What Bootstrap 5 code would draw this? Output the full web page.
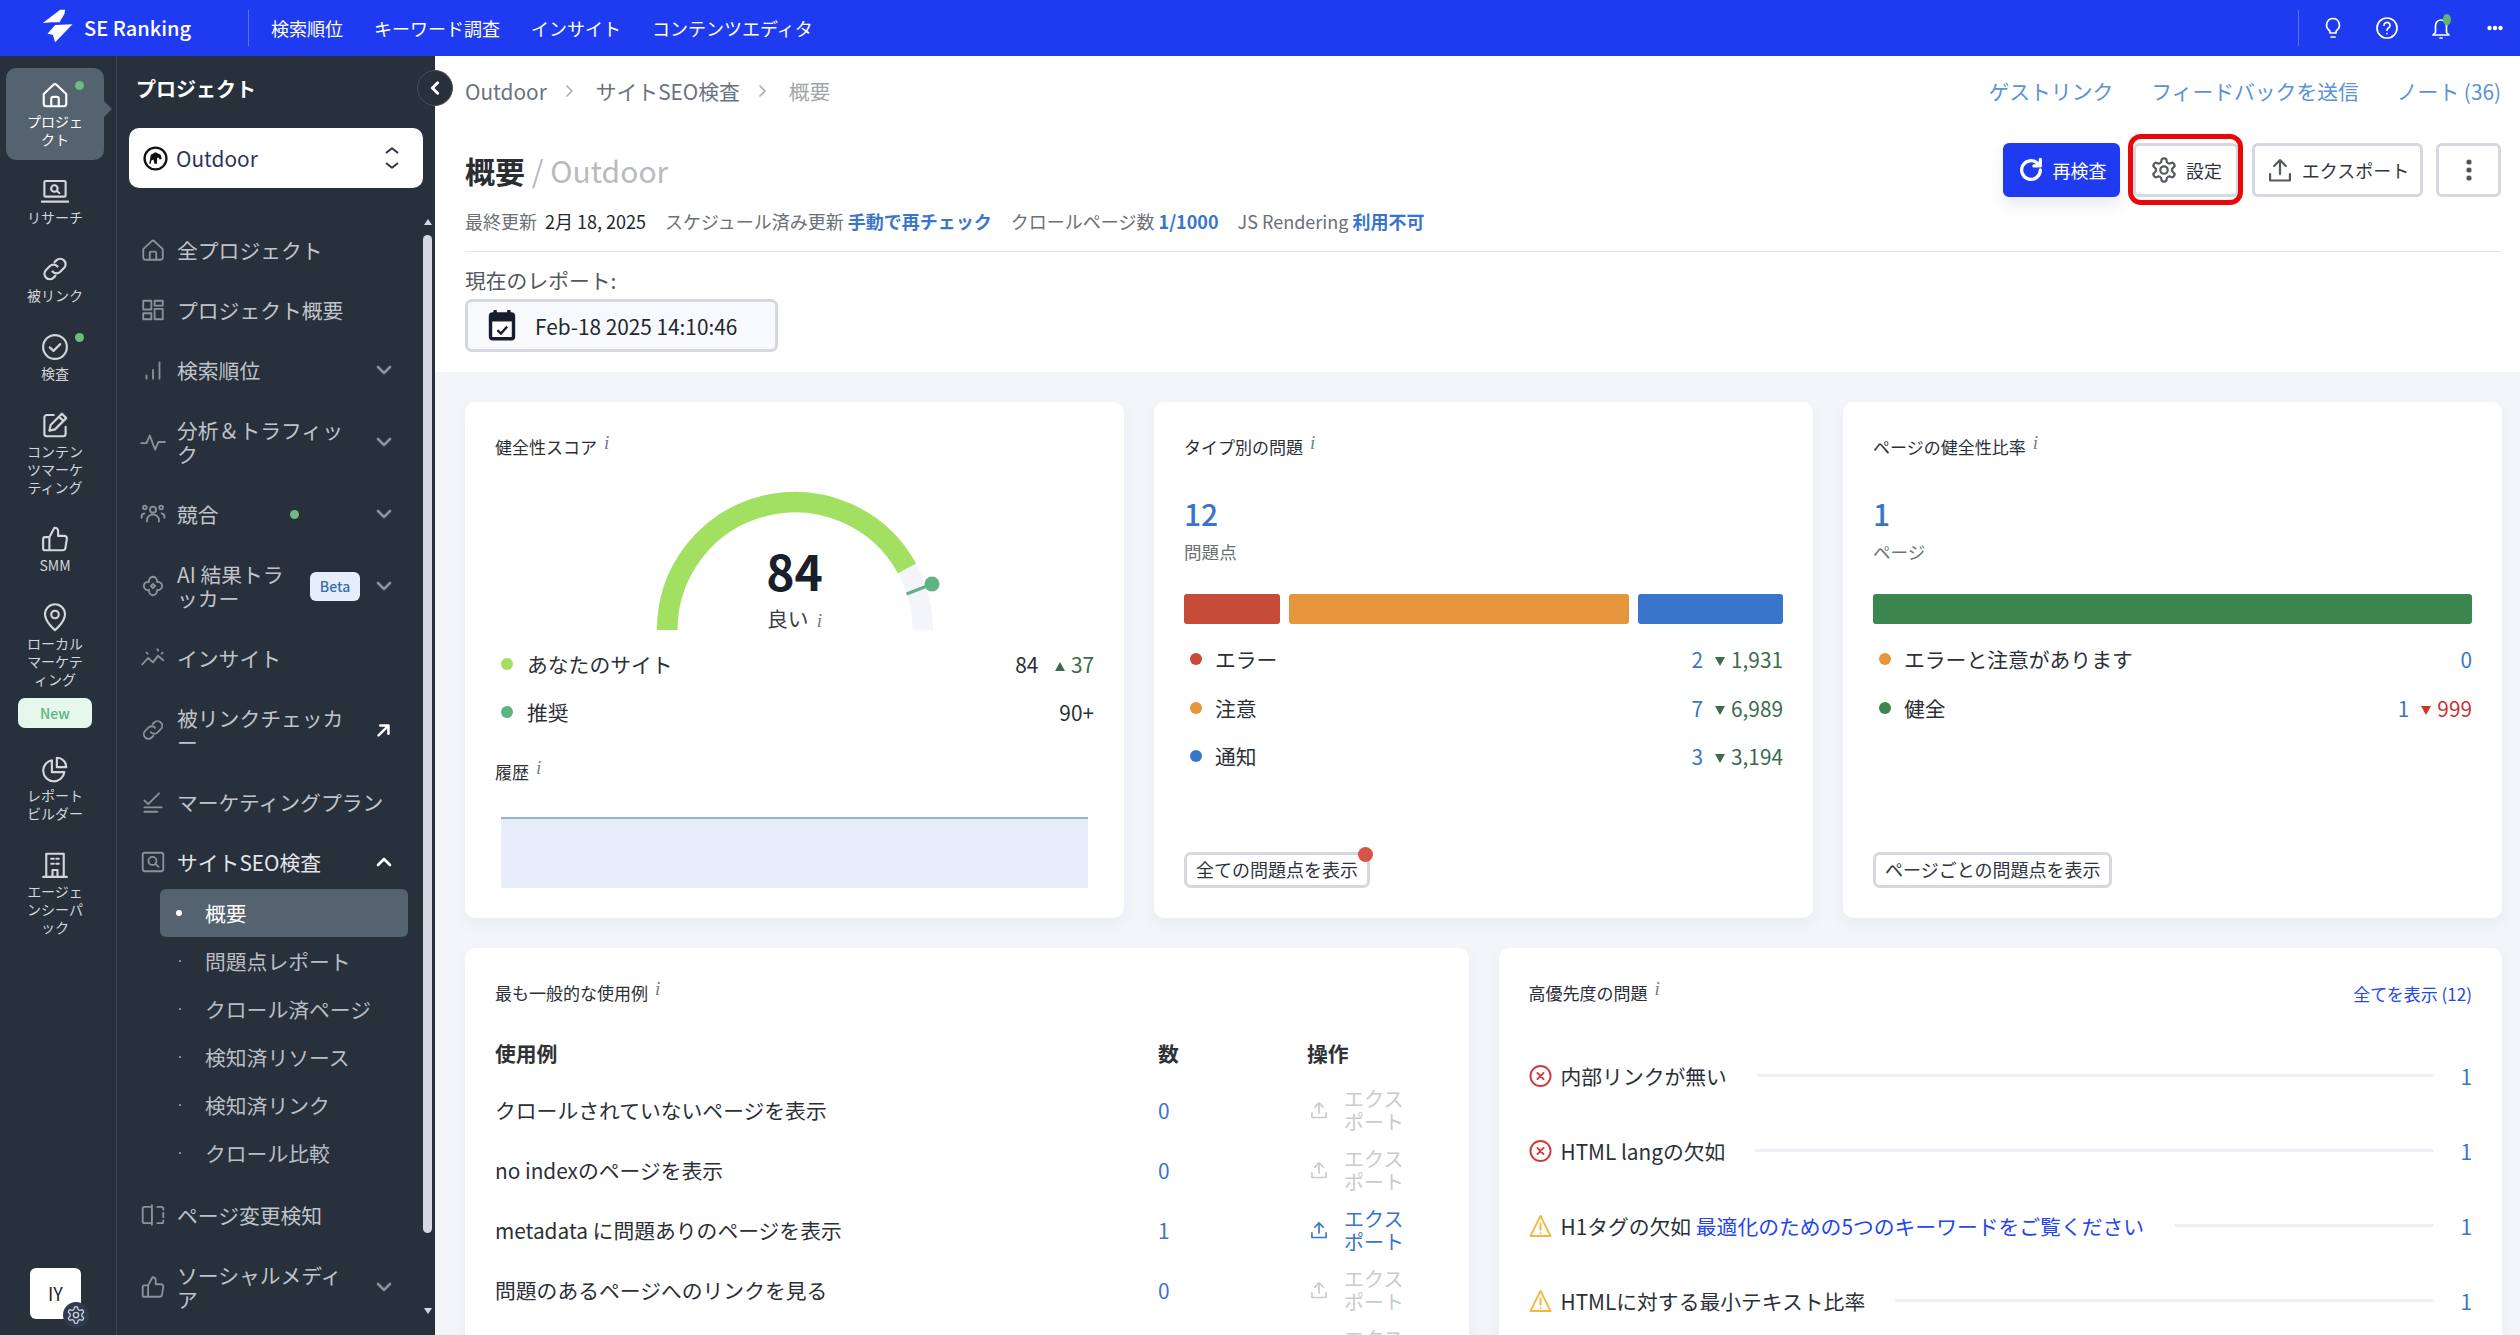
<!DOCTYPE html>
<html lang="ja">
<head>
<meta charset="utf-8">
<title>SE Ranking</title>
<link href="https://cdn.jsdelivr.net/npm/bootstrap@5.3.0/dist/css/bootstrap.min.css" rel="stylesheet">
<style>
html,body{height:100%;overflow:hidden;margin:0}
body{font-family:"Noto Sans CJK JP","Noto Sans",sans-serif;font-size:20.8px;color:#2b3038;background:#f3f5f9;line-height:24px}
svg.ico{fill:none;stroke:currentColor;stroke-width:1.7;stroke-linecap:round;stroke-linejoin:round;flex:none;display:block}
a{text-decoration:none}
.sr-top{height:56px;background:#1f3bf1;color:#fff;flex:none}
.sr-logo{margin:-4px 0 0 42px;width:31px;height:34px;fill:#fff;flex:none}
.sr-brand{margin-left:11px;font-size:20px;font-weight:500;width:107px;white-space:nowrap}
.sr-vline{width:1px;height:36px;background:rgba(255,255,255,.28)}
.sr-v1{margin-left:57px}
.sr-menu{margin-left:22px;gap:31px;font-size:18px;color:#fff;font-weight:400}
.sr-tools{margin-left:auto;margin-right:-2px}
.sr-tools .sr-vline{margin-right:7px}
.sr-tools .sr-tool{width:54px;height:30px;position:relative;color:#fff}
.sr-tool svg{width:24px;height:24px}
.sr-tool svg.sr-dots{width:16px;height:6px;fill:#fff}
.sr-tool-dot{position:absolute;width:8px;height:11px;border-radius:50%;background:#5fb56b;left:29px;top:1px}
.sr-wrap{flex:1;min-height:0}
.sr-rail{width:117px;flex:none;background:#27303b;border-right:1px solid #3c4651;padding:12px 12px 0 6px;position:relative;gap:4px}
.rail-it{width:98px;padding:12px 0 12px;border-radius:10px;color:#d3d6da;text-align:center;font-size:14px;line-height:18px;position:relative}
.rail-it svg{width:30px;height:30px;margin:0 auto 2px}
.rail-it span{display:block;width:60px;margin:0 auto;line-break:anywhere}
.rail-on{background:#556270;color:#fff}
.rail-on::after{content:"";position:absolute;right:-8px;top:33px;border-left:8px solid #556270;border-top:8px solid transparent;border-bottom:8px solid transparent}
.rail-dot{position:absolute;left:69px;top:13px;width:9px;height:9px;border-radius:50%;background:#6dbb83}
.rail-new{width:74px;height:30px;margin:-6px 0 10px 12px;background:#e6f7ec;color:#5db483;border-radius:7px;font-size:14px;font-weight:500;line-height:30px;text-align:center}
.rail-user{position:absolute;left:30px;top:1212px;width:51px;height:51px;background:#fff;border-radius:6px;color:#1c2430;font-size:18px;line-height:51px;text-align:center}
.rail-gear{position:absolute;left:33px;top:34px;width:26px;height:26px;border-radius:50%;background:#2f3b4e;color:#c8ccd2;display:flex;align-items:center;justify-content:center}
.rail-gear svg{width:20px;height:20px}
.sr-panel{width:318px;flex:none;background:#27303b;position:relative;color:#c0c4ca;overflow:hidden}
.panel-h{color:#fff;font-weight:700;font-size:20px;padding:21px 0 0 19px;height:64px}
.panel-sel{margin:8px 12px 0 12px;height:60px;background:#fff;border-radius:10px;color:#2a3658;padding:0 20px 0 14px}
.panel-sel svg.ud{width:22px;height:26px;margin-left:auto;color:#2a3040}
.sel-logo{width:25px;height:25px;margin-right:8px;flex:none}
.panel-list{margin-top:32px}
.navi{padding:18px 43px 18px 23px;color:#c0c4ca;line-height:24px;line-break:anywhere}
.navi>svg.ni{width:26px;height:26px;color:#8b929b;margin:-1px 11px -1px 0}
.navi-t{flex:0 0 170px}
.nt-short{flex-basis:113px}
.nt-ai{flex-basis:115px}
.nt-wide{flex-basis:225px}
.navi-up{color:#e3e5e8}
.navi .chev{width:16px;height:16px;margin-left:auto;color:#8b929b;stroke-width:2.6}
.navi .chev-w{color:#fff}
.navi .chev-x{stroke-width:3.6;width:17px;height:17px}
.navi-green{width:9px;height:9px;background:#6dbb83;border-radius:50%;flex:none}
.navi-beta{width:50px;height:29px;background:#e6eef9;color:#3a6cb0;font-size:14px;font-weight:500;border-radius:6px;text-align:center;line-height:29px;margin:0 16px 0 auto;flex:none}
.subs{margin:-3px 0 8px 43px;width:248px}
.sub-it{height:48px;border-radius:6px;padding-left:19px;color:#b9bdc4;display:flex;align-items:center}
.sub-it i{width:2px;height:2px;border-radius:50%;background:#aab0b7;margin-right:24px;flex:none;margin-left:0}
.sub-on{background:#556270;color:#fff}
.sub-on i{width:6px;height:6px;background:#fff;margin-right:23px;margin-left:-3px}
.sb-track{position:absolute;right:3px;top:179px;width:9px;height:998px;border-radius:5px;background:#d5d8e3}
.sb-up,.sb-dn{position:absolute;right:3px;width:0;border-left:4.5px solid transparent;border-right:4.5px solid transparent}
.sb-up{top:163px;border-bottom:6px solid #d5d8e3}
.sb-dn{top:1252px;border-top:6px solid #d5d8e3}
.sr-collapse{position:absolute;left:417px;top:14px;width:36px;height:36px;border-radius:50%;background:#27303b;border:1px solid #46505b;color:#fff;display:flex;align-items:center;justify-content:center;z-index:3}
.sr-collapse svg{width:14px;height:14px;stroke-width:3.4}
.sr-main{flex:1;min-width:0;overflow:hidden;background:#f3f5f9}
.top-sec{background:#fff;padding:23px 19px 19px 30px;height:316px}
.crumbs{height:24px;color:#6b7280;margin-bottom:40px}
.crumbs .sp{width:9px;height:14px;color:#a9adb4;margin:0 22px 0 18px;stroke-width:1.6}
.crumbs .cur{color:#a2a6ac}
.top-links{margin-left:auto;gap:38px}
.top-l{color:#5b92d8}
.title-row{height:54px}
.page-h{font-size:30px;font-weight:700;margin:0;color:#2a2d32;line-height:40px}
.page-h em{font-style:normal;font-weight:400;color:#b7babf}
.act-row{margin-left:auto;gap:13px}
.act-btn{height:54px;border-radius:6px;border:3px solid #d5d8e3;background:#fff;font-size:18px;color:#30353c;padding:0;box-shadow:none}
.act-btn svg.ico{width:28px;height:28px;color:#555a60;stroke-width:1.9}
.act-pri{width:117px;background:#1f3bf1;border-color:#1f3bf1;color:#fff;box-shadow:0 8px 14px rgba(40,60,120,.1)}
.act-pri:hover{background:#1f3bf1;border-color:#1f3bf1;color:#fff}
.act-pri svg.ico{color:#fff;stroke-width:2.8}
.act-set{width:106px;position:relative}
.act-set::after{content:"";position:absolute;left:-8px;top:-12px;right:-7px;bottom:-11px;border:5px solid #e80808;border-radius:13px;pointer-events:none}
.act-exp{width:171px}
.act-more{width:65px}
.metas{margin-top:12px;font-size:18px;color:#6b7076;gap:19px;line-height:24px;height:24px;white-space:nowrap}
.metas b{font-weight:400;color:#22272e}
.meta-l{color:#3a75cc;font-weight:700}
.top-hr{border-top:1.5px solid #e3e5ea;margin-top:18px}
.cur-lab{margin-top:15px;margin-bottom:1px;line-height:26px;color:#53575c}
.date-box{margin-top:6px;width:313px;height:53px;border:3px solid #d5d8e3;border-radius:7px;background:#f8f9fc;padding-left:20px;color:#22272e}
.date-box svg{width:28px;height:31px;margin-right:19px}
.cards{padding:30px 18px 0 30px}
.cards .row{--bs-gutter-x:30px;--bs-gutter-y:30px}
.sr-card{background:#fff;border-radius:10px;box-shadow:0 6px 16px rgba(35,50,90,.05);padding:34px 30px 30px}
.row1 .sr-card{height:516px}
.c-title{font-size:17px;line-height:22px;height:24px;color:#2b2f36;white-space:nowrap}
.c-title sup{font-family:"Liberation Serif",serif;font-style:italic;font-size:19px;color:#6f7d8d;margin-left:7px;top:-5px;line-height:0;position:relative;vertical-align:baseline}
.gauge{position:relative;height:150px;margin-top:20px}
.gauge svg{position:absolute;left:150px;top:0}
.gauge-n{position:absolute;left:0;right:0;top:70px;text-align:center;font-size:48px;line-height:40px;font-weight:700;color:#17202b}
.gauge-l{position:absolute;left:0;right:0;top:126px;text-align:center;line-height:24px;font-size:20.8px;color:#3b3f45;white-space:nowrap}
.gauge-l sup{font-family:"Liberation Serif",serif;font-style:italic;font-size:19px;color:#6f7d8d;margin-left:8px;top:0;vertical-align:baseline}
.leg-wrap{margin-top:10px}
.leg{height:48px}
.leg-d{width:12px;height:12px;border-radius:50%;margin:0 14px 0 6px;flex:none}
.leg-v{margin-left:auto;white-space:nowrap}
.d-lime{background:#a1e060}.d-teal{background:#5eb283}.d-red{background:#c64b38}.d-org{background:#e5953b}.d-blu{background:#3a75cc}.d-grn{background:#3c874f}
.v-blue{color:#3a75cc}
.v-green{color:#3a6b4d}
.v-red{color:#c93434}
.tri-up,.tri-dn{display:inline-block;width:0;border-left:5px solid transparent;border-right:5px solid transparent;margin:0 6px 0 12px;vertical-align:2px}
.tri-up{border-bottom:9px solid #3a6b4d}
.tri-dn{border-top:9px solid #3a6b4d}
.tri-r{border-top-color:#c93434}
.hist-t{margin-top:25px}
.hist-ch{margin:32px 6px 0;height:71px;background:#e7eef9;border-top:2px solid #8fb5e0}
.big-n{margin-top:33px;font-size:30px;line-height:40px;font-weight:500;color:#3a75cc}
.big-s{margin-top:7px;font-size:17.6px;color:#6a6f75}
.seg-bar{margin-top:30px;height:30px;gap:9px}
.seg-bar div{border-radius:3px}
.seg-leg{margin-top:11px}
.seg-leg .leg-d{margin:0 13px 0 6px}
.seg-leg .leg{height:48.5px}
.mini-btn{margin-top:auto;align-self:flex-start;height:36px;border:3px solid #d5d8e3;border-radius:7px;background:#fff;font-size:18px;color:#30353c;padding:0 9px;line-height:29px;position:relative;white-space:nowrap}
.mini-dot{position:absolute;right:-6px;top:-8px;width:15px;height:15px;border-radius:50%;background:#d65545}
.usetbl{table-layout:fixed;width:100%;margin:19px 0 0;--bs-table-bg:transparent;--bs-table-color:#2b2f36}
.usetbl .c1{width:663px}
.usetbl .c2{width:149px}
.usetbl th,.usetbl td{padding:0;vertical-align:middle;font-size:20.8px;line-height:24px}
.usetbl th{height:55px;font-weight:700;color:#2f3236}
.usetbl td{height:60px}
.exp-cell{width:100px;line-height:23px;font-size:20px}
.exp-cell svg{width:20px;height:22px;margin-right:15px;margin-left:2px;stroke-width:2}
.exp-cell span{width:62px;line-break:anywhere}
.exp-off{color:#c9cbce}
.exp-on{color:#3a75cc}
.show-all{margin-left:auto;font-size:17px;color:#2545ee;white-space:nowrap}
.pri-list{margin-top:32px}
.pri-row{height:75px}
.pri-row>svg{width:23px;height:26px;margin-right:9px;stroke-width:2}
.pri-err{color:#cf3a3a}
.pri-warn{color:#f3b63f}
.pri-line{flex:1;height:3px;background:#eff0f5;margin-left:30px}
.pri-n{width:38px;text-align:right;color:#3a75cc}
.pri-lk{color:#2545ee}
</style>
</head>
<body>
<svg width="0" height="0" class="position-absolute">
<defs>
<symbol id="i-home" viewBox="0 0 24 24"><path d="M3 11.2 10.6 4a2 2 0 0 1 2.8 0L21 11.2V19a2 2 0 0 1-2 2H5a2 2 0 0 1-2-2zM9 21v-6a1.5 1.5 0 0 1 1.5-1.5h3A1.5 1.5 0 0 1 15 15v6"/></symbol>
<symbol id="i-lap" viewBox="0 0 24 24"><rect x="3.5" y="4" width="17" height="12.5" rx="1"/><path d="M1.5 20.5h21"/><circle cx="11.5" cy="10" r="2.6"/><path d="m13.5 12 2 1.6"/></symbol>
<symbol id="i-link" viewBox="0 0 24 24"><path d="M10 14a4.2 4.2 0 0 0 6 .4l3.2-3.2a4.3 4.3 0 0 0-6.1-6.1l-1.4 1.4M14 10a4.2 4.2 0 0 0-6-.4l-3.2 3.2a4.3 4.3 0 0 0 6.1 6.1l1.4-1.4"/></symbol>
<symbol id="i-chk" viewBox="0 0 24 24"><circle cx="12" cy="12" r="9.5"/><path d="m7.8 12.3 3 2.8 5.4-5.4"/></symbol>
<symbol id="i-edit" viewBox="0 0 24 24"><path d="M20.500 13.500V19a2 2 0 0 1-2 2h-13a2 2 0 0 1-2-2V6a2 2 0 0 1 2-2H11"/><path d="M17.500 3 21 6.500 12 15.500l-4.500 1 1-4.500zM15.200 5.300l3.500 3.500"/></symbol>
<symbol id="i-thumb" viewBox="0 0 24 24"><path d="M7.500 10.500V21H4a1.500 1.500 0 0 1-1.500-1.500V12A1.500 1.500 0 0 1 4 10.500zM7.500 10.500 11.500 3a2.600 2.600 0 0 1 3 2.600V9.500h5a2 2 0 0 1 2 2.300l-1.200 7.500A2 2 0 0 1 18.300 21H7.500"/></symbol>
<symbol id="i-pin" viewBox="0 0 24 24"><path d="M12 22.500S4 15.800 4 9.800a8 8 0 0 1 16 0c0 6-8 12.700-8 12.700z"/><circle cx="12" cy="10" r="3"/></symbol>
<symbol id="i-pie" viewBox="0 0 24 24"><path d="M19.500 14.500A8.500 8.500 0 1 1 9.500 5v9.500z"/><path d="M13.500 3a7.500 7.500 0 0 1 7.500 7.500h-7.500z"/></symbol>
<symbol id="i-bld" viewBox="0 0 24 24"><path d="M5 21.500V3h14v18.500M2.500 21.500h19M9 7h2M13 7h2M9 11h2M13 11h2M10 21.500V16h4v5.500"/></symbol>
<symbol id="i-grid" viewBox="0 0 24 24"><rect x="3" y="3.500" width="7.500" height="8"/><rect x="13.500" y="3.500" width="7.500" height="4.500"/><rect x="3" y="15" width="7.500" height="5.500"/><rect x="13.500" y="11" width="7.500" height="9.500"/></symbol>
<symbol id="i-bars" viewBox="0 0 24 24"><path d="M6 20v-3M12 20v-8M18 20V5"/></symbol>
<symbol id="i-pulse" viewBox="0 0 24 24"><path d="M1 13h5l3-7 5 13 3-7h6"/></symbol>
<symbol id="i-users" viewBox="0 0 24 24"><circle cx="12" cy="8" r="2.800"/><path d="M6.500 19v-1.500a5.500 5 0 0 1 11 0V19"/><circle cx="4.500" cy="6" r="1.700"/><circle cx="19.500" cy="6" r="1.700"/><path d="M1.500 15.500a3.500 3.500 0 0 1 2.500-4M22.500 15.500a3.500 3.500 0 0 0-2.500-4"/></symbol>
<symbol id="i-ai" viewBox="0 0 24 24"><path d="M12 3.500a4 4 0 0 1 3.700 4.800A4 4 0 0 1 20.500 12a4 4 0 0 1-4.800 3.700A4 4 0 0 1 12 20.500a4 4 0 0 1-3.700-4.800A4 4 0 0 1 3.500 12a4 4 0 0 1 4.800-3.700A4 4 0 0 1 12 3.500z"/><path d="m12 10 2 2-2 2-2-2z"/></symbol>
<symbol id="i-ins" viewBox="0 0 24 24"><path d="m2 18 5.500-6 4.500 4 4.500-6 5 4M6 7l1 1M16 4l.8 1.200M21 7l-1 1"/></symbol>
<symbol id="i-ext" viewBox="0 0 24 24"><path d="M5 19 19 5M7.500 5H19v11.500"/></symbol>
<symbol id="i-list" viewBox="0 0 24 24"><path d="m4 10.500 3.500 3.500 10-10M4 17h16M4 21h12"/></symbol>
<symbol id="i-srch" viewBox="0 0 24 24"><rect x="2.500" y="3.500" width="19" height="17" rx="2"/><circle cx="11.500" cy="11" r="3.700"/><path d="m14.200 13.700 3 2.800"/></symbol>
<symbol id="i-split" viewBox="0 0 24 24"><path d="M11 3v18M11 4.500H4A1.500 1.500 0 0 0 2.500 6v12A1.500 1.500 0 0 0 4 19.500h7M16 4.500h4A1.500 1.500 0 0 1 21.500 6v1M21.500 10v4M21.500 17v1a1.500 1.500 0 0 1-1.500 1.500h-4"/></symbol>
<symbol id="i-dn" viewBox="0 0 16 16"><path d="m2 5 6 6 6-6"/></symbol>
<symbol id="i-up" viewBox="0 0 16 16"><path d="m2 11 6-6 6 6"/></symbol>
<symbol id="i-gear" viewBox="0 0 24 24"><path d="M12.220 2h-.44a2 2 0 0 0-2 2v.18a2 2 0 0 1-1 1.730l-.43.25a2 2 0 0 1-2 0l-.15-.08a2 2 0 0 0-2.730.73l-.22.38a2 2 0 0 0 .73 2.730l.15.1a2 2 0 0 1 1 1.720v.51a2 2 0 0 1-1 1.740l-.15.09a2 2 0 0 0-.73 2.730l.22.38a2 2 0 0 0 2.730.73l.15-.08a2 2 0 0 1 2 0l.43.25a2 2 0 0 1 1 1.730V20a2 2 0 0 0 2 2h.44a2 2 0 0 0 2-2v-.18a2 2 0 0 1 1-1.730l.43-.25a2 2 0 0 1 2 0l.15.08a2 2 0 0 0 2.730-.73l.22-.39a2 2 0 0 0-.73-2.730l-.15-.08a2 2 0 0 1-1-1.740v-.5a2 2 0 0 1 1-1.740l.15-.09a2 2 0 0 0 .73-2.730l-.22-.38a2 2 0 0 0-2.730-.73l-.15.08a2 2 0 0 1-2 0l-.43-.25a2 2 0 0 1-1-1.730V4a2 2 0 0 0-2-2z"/><circle cx="12" cy="12" r="3.200"/></symbol>
<symbol id="i-bulb" viewBox="0 0 24 24"><path d="M9 17h6M10 21h4M12 2.500a6.500 6.500 0 0 0-3.800 11.700c.6.500.8 1.100.8 2.800h6c0-1.700.2-2.300.8-2.800A6.500 6.500 0 0 0 12 2.500z"/></symbol>
<symbol id="i-help" viewBox="0 0 24 24"><circle cx="12" cy="12" r="10"/><path d="M9 9.200a3 3 0 1 1 4.500 2.700c-1 .6-1.500 1.200-1.500 2.300M12 17.500h.01"/></symbol>
<symbol id="i-bell" viewBox="0 0 24 24"><path d="M6.500 16.500V9.500a5.500 5.500 0 0 1 11 0v7l2.500 2.500H4zM11 22h2"/></symbol>
<symbol id="i-up2" viewBox="0 0 24 24"><path d="M12 15.500V3.500M7 8.500l5-5 5 5M3.500 15.500V21h17v-5.500"/></symbol>
<symbol id="i-x" viewBox="0 0 24 26"><circle cx="12" cy="13" r="10.500"/><path d="m8.800 9.800 6.400 6.400m0-6.400-6.400 6.400"/></symbol>
<symbol id="i-warn" viewBox="0 0 24 26"><path d="M12 2.500 22.500 23.500h-21zM12 10v7M12 20.500h.01"/></symbol>
</defs>
</svg>

<div class="d-flex flex-column vh-100">
  <nav class="sr-top d-flex align-items-center">
    <svg class="sr-logo" viewBox="36 28 92 102"><path d="M38 70 90 30h15l-2 12-15 26H64z"/><path d="M127 74 75 128 68 105 52 102 75 76z"/></svg>
    <div class="sr-brand">SE Ranking</div>
    <div class="sr-vline sr-v1"></div>
    <div class="sr-menu d-flex">
      <span>検索順位</span><span>キーワード調査</span><span>インサイト</span><span>コンテンツエディタ</span>
    </div>
    <div class="sr-tools d-flex align-items-center">
      <div class="sr-vline"></div>
      <div class="sr-tool d-flex justify-content-center align-items-center"><svg class="ico"><use href="#i-bulb"/></svg></div>
      <div class="sr-tool d-flex justify-content-center align-items-center"><svg class="ico"><use href="#i-help"/></svg></div>
      <div class="sr-tool d-flex justify-content-center align-items-center"><svg class="ico"><use href="#i-bell"/></svg><span class="sr-tool-dot"></span></div>
      <div class="sr-tool d-flex justify-content-center align-items-center"><svg class="sr-dots" viewBox="0 0 16 6"><circle cx="2.500" cy="3" r="2.200"/><circle cx="8" cy="3" r="2.200"/><circle cx="13.500" cy="3" r="2.200"/></svg></div>
    </div>
  </nav>

  <div class="sr-wrap d-flex position-relative">
    <aside class="sr-rail d-flex flex-column">
      <div class="rail-it rail-on"><svg class="ico"><use href="#i-home"/></svg><span>プロジェクト</span><i class="rail-dot"></i></div>
      <div class="rail-it"><svg class="ico"><use href="#i-lap"/></svg><span>リサーチ</span></div>
      <div class="rail-it"><svg class="ico"><use href="#i-link"/></svg><span>被リンク</span></div>
      <div class="rail-it"><svg class="ico"><use href="#i-chk"/></svg><span>検査</span><i class="rail-dot"></i></div>
      <div class="rail-it"><svg class="ico"><use href="#i-edit"/></svg><span>コンテンツマーケティング</span></div>
      <div class="rail-it"><svg class="ico"><use href="#i-thumb"/></svg><span>SMM</span></div>
      <div class="rail-it"><svg class="ico"><use href="#i-pin"/></svg><span>ローカルマーケティング</span></div>
      <div class="rail-new">New</div>
      <div class="rail-it"><svg class="ico"><use href="#i-pie"/></svg><span>レポートビルダー</span></div>
      <div class="rail-it"><svg class="ico"><use href="#i-bld"/></svg><span>エージェンシーパック</span></div>
      <div class="rail-user">IY<div class="rail-gear"><svg class="ico"><use href="#i-gear"/></svg></div></div>
    </aside>

    <aside class="sr-panel">
      <div class="panel-h">プロジェクト</div>
      <div class="panel-sel d-flex align-items-center">
        <svg class="sel-logo" viewBox="0 0 24 24"><circle cx="12" cy="12" r="10.500" fill="#fff" stroke="#111" stroke-width="2.200"/><path d="M6 17 7.500 8.500 12 6l5 2.500 1 4-2 .5-1-2-1.500.5V17h-2.500l-1-4L8 14l-.5 3z" fill="#111"/></svg>
        <span>Outdoor</span>
        <svg class="ico ud" viewBox="0 0 16 24" stroke-width="2.200"><path d="m3 7 5-4 5 4M3 17l5 4 5-4"/></svg>
      </div>
      <div class="panel-list">
        <a class="navi d-flex align-items-center"><svg class="ico ni"><use href="#i-home"/></svg><span class="navi-t">全プロジェクト</span></a>
        <a class="navi d-flex align-items-center"><svg class="ico ni"><use href="#i-grid"/></svg><span class="navi-t">プロジェクト概要</span></a>
        <a class="navi d-flex align-items-center"><svg class="ico ni"><use href="#i-bars"/></svg><span class="navi-t">検索順位</span><svg class="ico chev"><use href="#i-dn"/></svg></a>
        <a class="navi d-flex align-items-center"><svg class="ico ni"><use href="#i-pulse"/></svg><span class="navi-t">分析＆トラフィック</span><svg class="ico chev"><use href="#i-dn"/></svg></a>
        <a class="navi d-flex align-items-center"><svg class="ico ni"><use href="#i-users"/></svg><span class="navi-t nt-short">競合</span><i class="navi-green"></i><svg class="ico chev"><use href="#i-dn"/></svg></a>
        <a class="navi d-flex align-items-center"><svg class="ico ni"><use href="#i-ai"/></svg><span class="navi-t nt-ai">AI 結果トラッカー</span><span class="navi-beta">Beta</span><svg class="ico chev ms-0"><use href="#i-dn"/></svg></a>
        <a class="navi d-flex align-items-center"><svg class="ico ni"><use href="#i-ins"/></svg><span class="navi-t">インサイト</span></a>
        <a class="navi d-flex align-items-center"><svg class="ico ni"><use href="#i-link"/></svg><span class="navi-t">被リンクチェッカー</span><svg class="ico chev chev-w chev-x"><use href="#i-ext"/></svg></a>
        <a class="navi d-flex align-items-center"><svg class="ico ni"><use href="#i-list"/></svg><span class="navi-t nt-wide">マーケティングプラン</span></a>
        <a class="navi navi-up d-flex align-items-center"><svg class="ico ni"><use href="#i-srch"/></svg><span class="navi-t">サイトSEO検査</span><svg class="ico chev chev-w"><use href="#i-up"/></svg></a>
        <div class="subs">
          <div class="sub-it sub-on"><i></i>概要</div>
          <div class="sub-it"><i></i>問題点レポート</div>
          <div class="sub-it"><i></i>クロール済ページ</div>
          <div class="sub-it"><i></i>検知済リソース</div>
          <div class="sub-it"><i></i>検知済リンク</div>
          <div class="sub-it"><i></i>クロール比較</div>
        </div>
        <a class="navi d-flex align-items-center"><svg class="ico ni"><use href="#i-split"/></svg><span class="navi-t">ページ変更検知</span></a>
        <a class="navi d-flex align-items-center"><svg class="ico ni"><use href="#i-thumb"/></svg><span class="navi-t">ソーシャルメディア</span><svg class="ico chev"><use href="#i-dn"/></svg></a>
      </div>
      <div class="sb-up"></div><div class="sb-track"></div><div class="sb-dn"></div>
    </aside>
    <div class="sr-collapse"><svg class="ico" viewBox="0 0 16 16"><path d="m11 2-6 6 6 6"/></svg></div>

    <main class="sr-main">
      <section class="top-sec">
        <div class="crumbs d-flex align-items-center">
          <span>Outdoor</span><svg class="ico sp" viewBox="0 0 9 14"><path d="m2 2 5 5-5 5"/></svg>
          <span>サイトSEO検査</span><svg class="ico sp" viewBox="0 0 9 14"><path d="m2 2 5 5-5 5"/></svg>
          <span class="cur">概要</span>
          <div class="top-links d-flex"><a class="top-l">ゲストリンク</a><a class="top-l">フィードバックを送信</a><a class="top-l">ノート (36)</a></div>
        </div>
        <div class="title-row d-flex align-items-center">
          <h1 class="page-h">概要 <em>/ Outdoor</em></h1>
          <div class="act-row d-flex">
            <button class="btn act-btn act-pri d-flex align-items-center justify-content-center gap-2"><svg class="ico" viewBox="0 0 24 24"><path d="M20 12a8 8 0 1 1-2.600-5.900M20 3v5.500h-5.500"/></svg>再検査</button>
            <button class="btn act-btn act-set d-flex align-items-center justify-content-center gap-2"><svg class="ico"><use href="#i-gear"/></svg>設定</button>
            <button class="btn act-btn act-exp d-flex align-items-center justify-content-center gap-2"><svg class="ico"><use href="#i-up2"/></svg>エクスポート</button>
            <button class="btn act-btn act-more d-flex flex-column align-items-center justify-content-center"><svg viewBox="0 0 6 24" width="6" height="24" fill="#555"><circle cx="3" cy="4" r="2.600"/><circle cx="3" cy="12" r="2.600"/><circle cx="3" cy="20" r="2.600"/></svg></button>
          </div>
        </div>
        <div class="metas d-flex">
          <span>最終更新&nbsp; <b>2月 18, 2025</b></span>
          <span>スケジュール済み更新 <a class="meta-l">手動で再チェック</a></span>
          <span>クロールページ数 <a class="meta-l">1/1000</a></span>
          <span>JS Rendering <a class="meta-l">利用不可</a></span>
        </div>
        <div class="top-hr"></div>
        <div class="cur-lab">現在のレポート:</div>
        <div class="date-box d-flex align-items-center">
          <svg viewBox="0 0 24 27"><path d="M6 1v4M18 1v4" stroke="#161d2c" stroke-width="3" stroke-linecap="round"/><rect x="2" y="3.500" width="20" height="21.500" rx="2" fill="#fff" stroke="#161d2c" stroke-width="3"/><path d="M2 3.500h20V10H2z" fill="#161d2c"/><path d="m8 17.500 3 3 5.500-6" fill="none" stroke="#161d2c" stroke-width="2"/></svg>
          <span>Feb-18 2025 14:10:46</span>
        </div>
      </section>

      <section class="cards">
        <div class="row row1 row-cols-3">
          <div class="col"><div class="sr-card">
            <div class="c-title">健全性スコア<sup>i</sup></div>
            <div class="gauge">
              <svg width="300" height="150" viewBox="150 -12 300 150">
                <path d="M 172.200 138 A 127.800 127.800 0 0 1 427.800 138" fill="none" stroke="#f3f5f9" stroke-width="20.600"/>
                <path d="M 172.200 138 A 127.800 127.800 0 0 1 412 76.400" fill="none" stroke="#a1e060" stroke-width="20.600"/>
                <path d="M 411.500 102 L 436 92.500" stroke="#5eb283" stroke-width="3"/>
                <circle cx="437" cy="92" r="7.500" fill="#5eb283"/>
              </svg>
              <div class="gauge-n">84</div>
              <div class="gauge-l">良い<sup>i</sup></div>
            </div>
            <div class="leg-wrap">
              <div class="leg d-flex align-items-center"><span class="leg-d d-lime"></span><span>あなたのサイト</span><span class="leg-v">84 <i class="tri-up"></i><span class="v-green">37</span></span></div>
              <div class="leg d-flex align-items-center"><span class="leg-d d-teal"></span><span>推奨</span><span class="leg-v">90+</span></div>
            </div>
            <div class="c-title hist-t">履歴<sup>i</sup></div>
            <div class="hist-ch"></div>
          </div></div>

          <div class="col"><div class="sr-card d-flex flex-column">
            <div class="c-title">タイプ別の問題<sup>i</sup></div>
            <div class="big-n">12</div>
            <div class="big-s">問題点</div>
            <div class="seg-bar d-flex">
              <div class="d-red" style="width:96px"></div>
              <div class="d-org" style="width:340px"></div>
              <div class="d-blu" style="width:145px"></div>
            </div>
            <div class="seg-leg">
              <div class="leg d-flex align-items-center"><span class="leg-d d-red"></span><span>エラー</span><span class="leg-v"><span class="v-blue">2</span><i class="tri-dn"></i><span class="v-green">1,931</span></span></div>
              <div class="leg d-flex align-items-center"><span class="leg-d d-org"></span><span>注意</span><span class="leg-v"><span class="v-blue">7</span><i class="tri-dn"></i><span class="v-green">6,989</span></span></div>
              <div class="leg d-flex align-items-center"><span class="leg-d d-blu"></span><span>通知</span><span class="leg-v"><span class="v-blue">3</span><i class="tri-dn"></i><span class="v-green">3,194</span></span></div>
            </div>
            <div class="mini-btn">全ての問題点を表示<span class="mini-dot"></span></div>
          </div></div>

          <div class="col"><div class="sr-card d-flex flex-column">
            <div class="c-title">ページの健全性比率<sup>i</sup></div>
            <div class="big-n">1</div>
            <div class="big-s text-secondary">ページ</div>
            <div class="seg-bar d-flex"><div class="d-grn w-100"></div></div>
            <div class="seg-leg">
              <div class="leg d-flex align-items-center"><span class="leg-d d-org"></span><span>エラーと注意があります</span><span class="leg-v v-blue">0</span></div>
              <div class="leg d-flex align-items-center"><span class="leg-d d-grn"></span><span>健全</span><span class="leg-v"><span class="v-blue">1</span><i class="tri-dn tri-r"></i><span class="v-red">999</span></span></div>
            </div>
            <div class="mini-btn">ページごとの問題点を表示</div>
          </div></div>
        </div>

        <div class="row row-cols-2 mt-0">
          <div class="col"><div class="sr-card">
            <div class="c-title">最も一般的な使用例<sup>i</sup></div>
            <table class="table table-borderless usetbl">
              <colgroup><col class="c1"><col class="c2"><col class="c3"></colgroup>
              <thead><tr><th>使用例</th><th>数</th><th>操作</th></tr></thead>
              <tbody>
                <tr><td>クロールされていないページを表示</td><td class="v-blue">0</td><td><div class="exp-cell exp-off d-flex align-items-center"><svg class="ico"><use href="#i-up2"/></svg><span>エクスポート</span></div></td></tr>
                <tr><td>no indexのページを表示</td><td class="v-blue">0</td><td><div class="exp-cell exp-off d-flex align-items-center"><svg class="ico"><use href="#i-up2"/></svg><span>エクスポート</span></div></td></tr>
                <tr><td>metadata に問題ありのページを表示</td><td class="v-blue">1</td><td><div class="exp-cell exp-on d-flex align-items-center"><svg class="ico"><use href="#i-up2"/></svg><span>エクスポート</span></div></td></tr>
                <tr><td>問題のあるページへのリンクを見る</td><td class="v-blue">0</td><td><div class="exp-cell exp-off d-flex align-items-center"><svg class="ico"><use href="#i-up2"/></svg><span>エクスポート</span></div></td></tr>
                <tr><td></td><td></td><td><div class="exp-cell exp-off d-flex align-items-center"><svg class="ico"><use href="#i-up2"/></svg><span>エクスポート</span></div></td></tr>
              </tbody>
            </table>
          </div></div>
          <div class="col"><div class="sr-card">
            <div class="d-flex"><div class="c-title">高優先度の問題<sup>i</sup></div><a class="show-all">全てを表示 (12)</a></div>
            <div class="pri-list">
              <div class="pri-row d-flex align-items-center"><svg class="ico pri-err"><use href="#i-x"/></svg><span>内部リンクが無い</span><div class="pri-line"></div><span class="pri-n">1</span></div>
              <div class="pri-row d-flex align-items-center"><svg class="ico pri-err"><use href="#i-x"/></svg><span>HTML langの欠如</span><div class="pri-line"></div><span class="pri-n">1</span></div>
              <div class="pri-row d-flex align-items-center"><svg class="ico pri-warn"><use href="#i-warn"/></svg><span>H1タグの欠如 <a class="pri-lk">最適化のための5つのキーワードをご覧ください</a></span><div class="pri-line"></div><span class="pri-n">1</span></div>
              <div class="pri-row d-flex align-items-center"><svg class="ico pri-warn"><use href="#i-warn"/></svg><span>HTMLに対する最小テキスト比率</span><div class="pri-line"></div><span class="pri-n">1</span></div>
            </div>
          </div></div>
        </div>
      </section>
    </main>
  </div>
</div>
<script src="https://cdn.jsdelivr.net/npm/bootstrap@5.3.0/dist/js/bootstrap.bundle.min.js"></script>
</body>
</html>
